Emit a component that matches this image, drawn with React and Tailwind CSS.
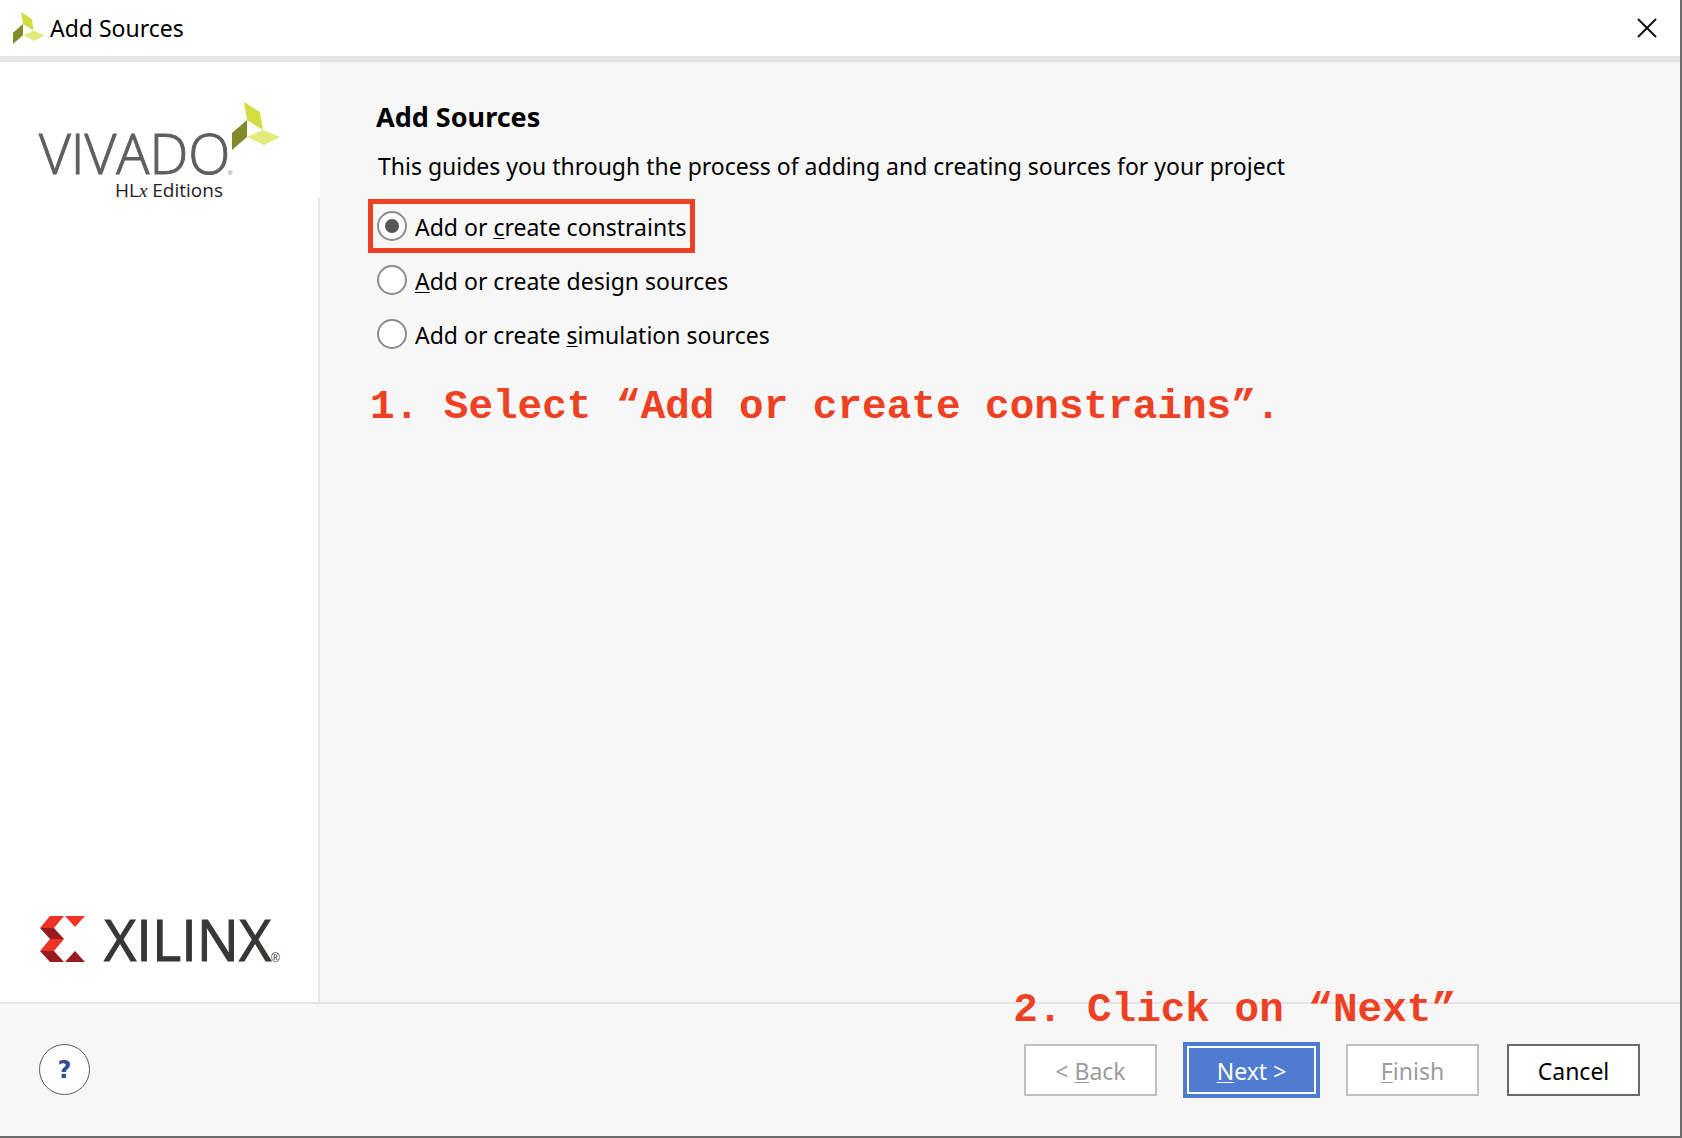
import React, { useState } from "react";

function VivadoMark() {
  return (
    <>
      <polygon points="204,0 220,10 223,28 207,18" fill="#d3de44" />
      <polygon points="192,31 207,18 207,35 192,48" fill="#838a2b" />
      <polygon points="223,28 240,35 224,43 207,35" fill="#e3ea7c" />
    </>
  );
}

function VivadoLogo() {
  return (
    <div role="img" aria-label="Vivado HLx Editions">
      <svg viewBox="0 0 240 104" className="h-[104px] w-60 overflow-visible">
        <VivadoMark />
        <text x="-1" y="72" fontFamily="Open Sans, sans-serif" fontWeight="300" fontSize="55" fill="#5f5f5d" stroke="#5f5f5d" strokeWidth="1">VIVADO</text>
        <text x="188" y="73" fontFamily="Liberation Sans, sans-serif" fontSize="6" fill="#5f5f5d">®</text>
        <text x="75" y="95" fontFamily="Open Sans, sans-serif" fontSize="19" fill="#222">
          HL<tspan fontFamily="Liberation Serif, serif" fontStyle="italic">x</tspan> Editions
        </text>
      </svg>
    </div>
  );
}

function XilinxLogo() {
  return (
    <svg viewBox="0 0 240 46" className="h-[46px] w-60 overflow-visible" role="img" aria-label="Xilinx">
      <polygon points="10,0 24,0 14,12 0,12" fill="#ee3326" />
      <polygon points="25,0 45,0 35,11" fill="#ee3326" />
      <polygon points="0,12 14,12 24,23 10,23" fill="#981b20" />
      <polygon points="10,23 24,23 14,35 0,35" fill="#ee3326" />
      <polygon points="0,35 14,35 24,46 10,46" fill="#981b20" />
      <polygon points="35,35 45,46 25,46" fill="#981b20" />
      <text x="64" y="45" fontFamily="Open Sans, sans-serif" fontSize="56" fill="#373735" stroke="#373735" strokeWidth="1">XILINX</text>
      <text x="231" y="46" fontFamily="Liberation Sans, sans-serif" fontSize="12" fill="#373735">®</text>
    </svg>
  );
}

const options = [
  { id: "constraints", before: "Add or ", key: "c", after: "reate constraints" },
  { id: "design", before: "", key: "A", after: "dd or create design sources" },
  { id: "simulation", before: "Add or create ", key: "s", after: "imulation sources" },
];

function Mnemonic({ children }) {
  return <span className="underline decoration-1 underline-offset-2">{children}</span>;
}

const note = "font-['Liberation_Mono',monospace] text-[41px] leading-[48px] font-bold whitespace-nowrap text-[#ee4023]";
const button = "h-[52px] w-[133px] border-2 pt-0.5 text-[23px]";

export default function App() {
  const [selected, setSelected] = useState("constraints");
  return (
    <div className="flex min-h-screen flex-col border-r-2 border-b-2 border-[#6d6d6d] bg-[#f7f7f7] font-['Noto_Sans',sans-serif] text-black">
      <header className="flex h-[62px] items-center border-b-6 border-[#e5e5e5] bg-white pr-[23px] pl-[13px]">
        <svg viewBox="192 0 48 48" className="size-8" aria-hidden="true">
          <VivadoMark />
        </svg>
        <h1 className="ml-[5px] text-[23px]">Add Sources</h1>
        <button type="button" aria-label="Close" className="ml-auto">
          <svg viewBox="0 0 20 20" className="size-5" fill="none" stroke="#111" strokeWidth="2">
            <path d="M1 1 19 19M19 1 1 19" />
          </svg>
        </button>
      </header>

      <div className="flex grow">
        <aside className="flex w-80 shrink-0 flex-col bg-white">
          <div className="h-[136px] pt-10 pl-10">
            <VivadoLogo />
          </div>
          <div className="flex grow flex-col justify-end border-r-2 border-[#e5e5e5] pb-10 pl-10">
            <XilinxLogo />
          </div>
        </aside>

        <main className="grow pt-[35px] pl-12">
          <h2 className="pl-2 text-[27px] leading-10 font-bold">Add Sources</h2>
          <p className="mt-[13px] pl-2.5 text-[23px] leading-8">
            This guides you through the process of adding and creating sources for your project
          </p>
          <fieldset className="mt-[17px] flex flex-col items-start">
            <legend className="sr-only">Source type</legend>
            {options.map((o) => (
              <label
                key={o.id}
                className={
                  "flex h-[54px] items-center gap-2 border-5 pr-[3px] pl-1 text-[23px] " +
                  (o.id === "constraints" ? "border-[#ee4023]" : "border-transparent")
                }
              >
                <input
                  type="radio"
                  name="source"
                  checked={selected === o.id}
                  onChange={() => setSelected(o.id)}
                  className="grid size-[30px] appearance-none place-items-center rounded-full border-2 border-[#8c8c8c] bg-white before:size-3.5 before:rounded-full checked:before:bg-[#565856]"
                />
                <span className="pt-0.5">
                  {o.before}
                  <Mnemonic>{o.key}</Mnemonic>
                  {o.after}
                </span>
              </label>
            ))}
          </fieldset>
          <p className={"mt-[22px] pl-0.5 " + note}>1. Select “Add or create constrains”.</p>
        </main>
      </div>

      <footer className="relative flex h-[134px] items-start border-t-2 border-[#e5e5e5] pt-10 pr-10 pl-[39px]">
        <p className={"absolute -top-[18px] right-56 " + note}>2. Click on “Next”</p>
        <button type="button" aria-label="Help" className="size-[51px] rounded-full border border-[#5a5a5a] bg-white font-['DejaVu_Sans',sans-serif] text-2xl font-bold text-[#2f4f8f]">
          ?
        </button>
        <div className="ml-auto flex gap-7">
          <button type="button" disabled className={button + " border-[#c0c0c0] bg-white text-[#9c9c9c]"}>
            &lt; <Mnemonic>B</Mnemonic>ack
          </button>
          <button type="button" className={button + " border-[#4f7bd0] bg-[#4f7bd0] text-white outline-2 outline-[#4f7bd0] inset-ring-2 inset-ring-white"}>
            <Mnemonic>N</Mnemonic>ext &gt;
          </button>
          <button type="button" disabled className={button + " border-[#c0c0c0] bg-white text-[#9c9c9c]"}>
            <Mnemonic>F</Mnemonic>inish
          </button>
          <button type="button" className={button + " border-[#6a6a6a] bg-white"}>Cancel</button>
        </div>
      </footer>
    </div>
  );
}
